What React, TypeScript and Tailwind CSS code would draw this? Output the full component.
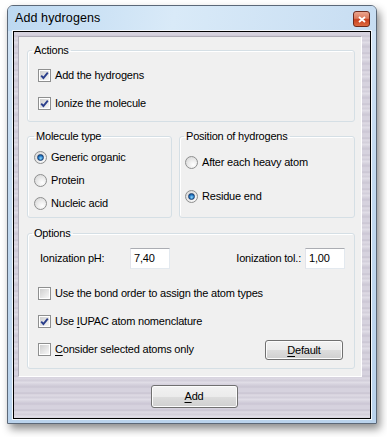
import React from 'react'

function Check({ checked }: { checked?: boolean }) {
  return (
    <span className="w-[13px] h-[13px] shrink-0 border border-[#8e8f8f] bg-white p-[1px] flex">
      <span className="flex-1 flex items-center justify-center bg-[linear-gradient(135deg,#cfcfcf,#f7f7f7)]">
        {checked && (
          <svg viewBox="0 0 9 9" className="w-[9px] h-[9px]">
            <path d="M1.2 4.6 L3.4 7 L7.8 1.6" fill="none" stroke="#2b3f8c" strokeWidth="1.9" />
          </svg>
        )}
      </span>
    </span>
  )
}

function Radio({ checked }: { checked?: boolean }) {
  return (
    <span className="w-[13px] h-[13px] shrink-0 rounded-full border border-[#8e8f8f] bg-[radial-gradient(circle_at_65%_70%,#ffffff,#d2d2d2)] flex items-center justify-center">
      {checked && (
        <span className="w-[7px] h-[7px] rounded-full border border-[#1d3f6e] bg-[radial-gradient(circle_at_55%_65%,#8fd8ff,#1d74c2_55%,#0c3a73)]" />
      )}
    </span>
  )
}

function WinButton({ children, className }: { children: React.ReactNode; className: string }) {
  return (
    <div
      className={`${className} border border-[#707070] rounded-[3px] bg-[linear-gradient(180deg,#f2f2f2_0%,#ebebeb_50%,#dddddd_51%,#cfcfcf_100%)] shadow-[inset_0_0_0_1px_#fcfcfc] flex items-center justify-center text-[11px] text-black`}
    >
      {children}
    </div>
  )
}

function Row({ children, className = '' }: { children: React.ReactNode; className?: string }) {
  return <div className={`flex items-center gap-[4px] ${className}`}>{children}</div>
}

export default function App() {
  return (
    <div className="w-[387px] h-[437px] bg-white pt-[5px] pl-[7px] font-['Liberation_Sans',Arial,sans-serif] text-[11px] tracking-[-0.2px] text-black">
      {/* Window */}
      <div className="w-[370px] h-[419px] rounded-t-[6px] border border-[#5b6878] bg-[linear-gradient(180deg,#d3e5f6_0%,#c3daf0_40%,#bad3ec_100%)] shadow-[3px_5px_9px_rgba(0,0,0,0.45)] flex flex-col">
        {/* Title bar */}
        <div className="h-[25px] flex items-center pl-[7px] pr-[6px] bg-[linear-gradient(100deg,#bcd8f1_0%,#d9eaf8_45%,#c7ddf2_100%)] rounded-t-[5px]">
          <span className="text-[12.5px] text-black tracking-[0.1px]">Add hydrogens</span>
          <div className="ml-auto mt-[1px] w-[17px] h-[16px] rounded-[3px] border border-[#6d2a1d] bg-[linear-gradient(180deg,#eba58f_0%,#dc7a5c_45%,#c8401f_55%,#de6a40_100%)] flex items-center justify-center">
            <svg viewBox="0 0 8 7" className="w-[8px] h-[7px]">
              <path d="M1 1 L7 6 M7 1 L1 6" stroke="#fff" strokeWidth="1.8" />
            </svg>
          </div>
        </div>

        {/* Client area */}
        <div className="ml-[5px] w-[358px] h-[388px] border border-black shadow-[0_0_0_1px_#f4f8fc] bg-[repeating-linear-gradient(180deg,#d6d2de_0px,#d6d2de_3px,#c7c2d0_4px,#dedae4_6px,#d1cdd9_9px,#e2dfe8_10px,#d3cfdb_13px,#cbc6d4_15px,#d9d5e0_17px)] pt-[4px] pl-[4px] flex flex-col">
          {/* Panel */}
          <div className="w-[344px] h-[341px] bg-[#f0f0f0] border-t border-l border-[#aeabb6] border-r-white border-b-white border-r border-b flex flex-col pl-[8px]">
            {/* Actions */}
            <fieldset className="mt-[6px] w-[328px] h-[79px] border border-[#d5dfe5] rounded-[3px] shadow-[inset_1px_1px_0_#ffffff]">
              <legend className="ml-[4px] px-[2px] leading-[14px]">Actions</legend>
              <div className="pl-[10px] pt-[4px] flex flex-col">
                <Row className="h-[28px]">
                  <Check checked />
                  <span>Add the hydrogens</span>
                </Row>
                <Row className="h-[28px]">
                  <Check checked />
                  <span>Ionize the molecule</span>
                </Row>
              </div>
            </fieldset>

            <div className="mt-[7px] flex gap-[7px]">
              {/* Molecule type */}
              <fieldset className="w-[145px] h-[89px] border border-[#d5dfe5] rounded-[3px] shadow-[inset_1px_1px_0_#ffffff]">
                <legend className="ml-[6px] px-[2px] leading-[14px]">Molecule type</legend>
                <div className="pl-[6px] pt-[3px] flex flex-col">
                  <Row className="h-[23px]">
                    <Radio checked />
                    <span>Generic organic</span>
                  </Row>
                  <Row className="h-[23px]">
                    <Radio />
                    <span>Protein</span>
                  </Row>
                  <Row className="h-[23px]">
                    <Radio />
                    <span>Nucleic acid</span>
                  </Row>
                </div>
              </fieldset>

              {/* Position of hydrogens */}
              <fieldset className="w-[176px] h-[89px] border border-[#d5dfe5] rounded-[3px] shadow-[inset_1px_1px_0_#ffffff]">
                <legend className="ml-[4px] px-[2px] leading-[14px]">Position of hydrogens</legend>
                <div className="pl-[5px] pt-[2px] flex flex-col">
                  <Row className="h-[34px]">
                    <Radio />
                    <span>After each heavy atom</span>
                  </Row>
                  <Row className="h-[34px]">
                    <Radio checked />
                    <span>Residue end</span>
                  </Row>
                </div>
              </fieldset>
            </div>

            {/* Options */}
            <fieldset className="mt-[8px] w-[328px] h-[143px] border border-[#d5dfe5] rounded-[3px] shadow-[inset_1px_1px_0_#ffffff]">
              <legend className="ml-[4px] px-[2px] leading-[14px]">Options</legend>
              <div className="pt-[4px] flex flex-col">
                <div className="h-[28px] flex items-center pl-[12px] pr-[9px]">
                  <span className="w-[90px]">Ionization pH:</span>
                  <div className="w-[40px] h-[21px] bg-white border border-[#abadb3] border-l-[#e2e3ea] border-r-[#e3e9ef] border-b-[#e3e9ef] flex items-center pl-[3px]">
                    7,40
                  </div>
                  <span className="ml-auto">Ionization tol.:</span>
                  <div className="ml-[4px] w-[40px] h-[21px] bg-white border border-[#abadb3] border-l-[#e2e3ea] border-r-[#e3e9ef] border-b-[#e3e9ef] flex items-center pl-[3px]">
                    1,00
                  </div>
                </div>
                <div className="mt-[7px] pl-[10px] pr-[11px] flex flex-col">
                  <Row className="h-[28px]">
                    <Check />
                    <span>Use the bond order to assign the atom types</span>
                  </Row>
                  <Row className="h-[28px]">
                    <Check checked />
                    <span>
                      Use <span className="underline underline-offset-[2px]">I</span>UPAC atom nomenclature
                    </span>
                  </Row>
                  <Row className="h-[28px]">
                    <Check />
                    <span>
                      <span className="underline underline-offset-[2px]">C</span>onsider selected atoms only
                    </span>
                    <WinButton className="ml-auto mt-[2px] w-[78px] h-[20px]">
                      <span>
                        <span className="underline underline-offset-[2px]">D</span>efault
                      </span>
                    </WinButton>
                  </Row>
                </div>
              </div>
            </fieldset>
          </div>

          {/* Bottom button */}
          <div className="mt-[8px] flex justify-center">
            <WinButton className="w-[87px] h-[23px]">
              <span>
                <span className="underline underline-offset-[2px]">A</span>dd
              </span>
            </WinButton>
          </div>
        </div>
      </div>
    </div>
  )
}
